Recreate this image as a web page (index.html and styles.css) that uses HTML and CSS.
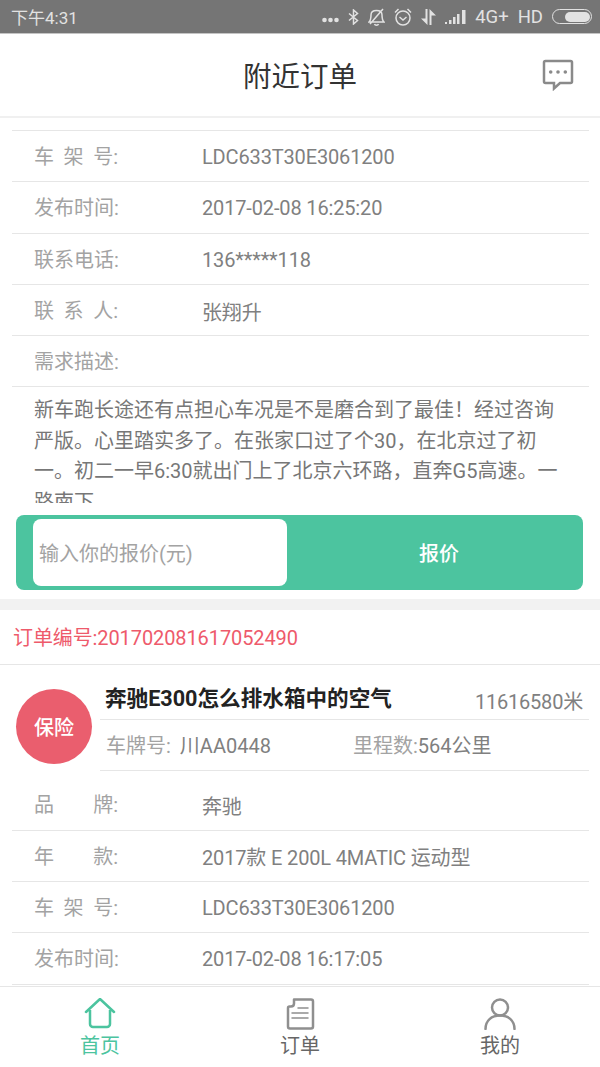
FILE: index.html
```html
<!DOCTYPE html>
<html lang="zh-CN">
<head>
    <meta charset="UTF-8">
    <meta name="viewport" content="width=device-width, initial-scale=1.0">
    <title>附近订单</title>
    <link rel="stylesheet" href="styles.css">
</head>
<body>
    <div class="page">
        <!-- Status bar -->
        <div class="status-bar">
            <span class="status-time">下午4:31</span>
            <div class="status-right">
                <svg class="st-fill st-dots" width="17" height="6" viewBox="0 0 17 6"><circle cx="2.500" cy="3" r="2.300"/><circle cx="8.500" cy="3" r="2.300"/><circle cx="14.500" cy="3" r="2.300"/></svg>
                <svg class="st-line" width="11" height="16" viewBox="0 0 11 16"><path d="M1 4.500l8.500 7-4 3.500V1l4 3.500L1 11.500"/></svg>
                <svg class="st-line" width="17" height="18" viewBox="0 0 17 18"><path d="M1 14c2-2 2-4 2-7s2-4.500 5.500-4.500S14 4 14 7s0 5 2 7zM6.500 16c.5 1.500 3.500 1.500 4 0M2 16L15 1"/></svg>
                <svg class="st-line" width="18" height="18" viewBox="0 0 18 18"><circle cx="9" cy="10" r="7"/><path d="M5.500 9l3.500 3 3.500-3M1 4.500L4.500 1M17 4.500L13.500 1"/></svg>
                <svg class="st-fill" width="15" height="16" viewBox="0 0 15 16"><path d="M4.500 0h2v16L0 9.500h4.500zM8.500 0L15 6.500h-4.500V16h-2z"/></svg>
                <svg class="st-fill" width="21" height="14" viewBox="0 0 21 14"><rect x="0" y="12" width="2" height="2"/><rect x="4" y="10" width="2.500" height="4"/><rect x="8" y="7" width="2.500" height="7"/><rect x="12" y="4" width="2.500" height="10"/><rect x="17" y="0" width="3.500" height="14"/></svg>
                <span class="status-net">4G+</span>
                <span class="status-net">HD</span>
                <div class="battery"><div class="battery-level"></div></div>
            </div>
        </div>

        <!-- Header -->
        <div class="header">
            <h1>附近订单</h1>
            <svg class="msg-icon" width="32" height="32" viewBox="0 0 32 32"><path d="M3.500 2h25a1.500 1.500 0 0 1 1.500 1.500v19a1.500 1.500 0 0 1-1.500 1.500H18l-6 5.500V24H3.500A1.500 1.500 0 0 1 2 22.500v-19A1.500 1.500 0 0 1 3.500 2z"/><circle cx="8.700" cy="13" r="1.800"/><circle cx="16" cy="13" r="1.800"/><circle cx="23.300" cy="13" r="1.800"/></svg>
        </div>

        <div class="content">
            <!-- First order (scrolled) -->
            <div class="order-first">
                <div class="info-row"><div class="label"><span>车</span><span>架</span><span>号:</span></div><span class="value">LDC633T30E3061200</span></div>
                <div class="info-row"><div class="label"><span>发布时间:</span></div><span class="value">2017-02-08 16:25:20</span></div>
                <div class="info-row"><div class="label"><span>联系电话:</span></div><span class="value">136*****118</span></div>
                <div class="info-row"><div class="label"><span>联</span><span>系</span><span>人:</span></div><span class="value">张翔升</span></div>
                <div class="info-row"><div class="label"><span>需求描述:</span></div></div>
                <div class="desc">新车跑长途还有点担心车况是不是磨合到了最佳！经过咨询严版。心里踏实多了。在张家口过了个30，在北京过了初一。初二一早6:30就出门上了北京六环路，直奔G5高速。一路南下。</div>
            </div>

            <div class="quote-bar">
                <div class="quote-input">输入你的报价(元)</div>
                <div class="quote-btn">报价</div>
            </div>

            <div class="divider"></div>

            <!-- Second order -->
            <div class="order-no">订单编号:201702081617052490</div>
            <div class="order-top">
                <div class="badge">保险</div>
                <div class="order-main">
                    <div class="order-title">
                        <span class="title-text">奔驰E300怎么排水箱中的空气</span>
                        <span class="distance">11616580米</span>
                    </div>
                    <div class="order-sub">
                        <span class="sub-plate"><span class="sub-label">车牌号:</span><span class="plate-no">川AA0448</span></span>
                        <span><span class="sub-label">里程数:</span>564公里</span>
                    </div>
                </div>
            </div>
            <div class="info-row no-line"><div class="label"><span>品</span><span>牌:</span></div><span class="value">奔驰</span></div>
            <div class="info-row"><div class="label"><span>年</span><span>款:</span></div><span class="value">2017款 E 200L 4MATIC 运动型</span></div>
            <div class="info-row"><div class="label"><span>车</span><span>架</span><span>号:</span></div><span class="value">LDC633T30E3061200</span></div>
            <div class="info-row"><div class="label"><span>发布时间:</span></div><span class="value">2017-02-08 16:17:05</span></div>
            <div class="info-row"></div>
        </div>

        <!-- Bottom tabs -->
        <div class="tabbar">
            <div class="tab tab-active">
                <svg width="32" height="32" viewBox="0 0 32 32"><path d="M2 14L16 1l14 13M6 12v14a3 3 0 0 0 3 3h14a3 3 0 0 0 3-3V12"/></svg>
                <span>首页</span>
            </div>
            <div class="tab">
                <svg width="32" height="32" viewBox="0 0 32 32"><path d="M10 1.500h17a2 2 0 0 1 2 2v25a2 2 0 0 1-2 2H6a2 2 0 0 1-2-2V10q0-1.500 1.500-1.500H7q3 0 3-3z"/><path class="thin" d="M14 10h10M8 15h16M8 20h16"/></svg>
                <span>订单</span>
            </div>
            <div class="tab">
                <svg width="32" height="32" viewBox="0 0 32 32"><circle cx="16" cy="9.500" r="8"/><path d="M1.500 31c0-8.500 6-13.500 14.500-13.500S30.500 22.500 30.500 31"/></svg>
                <span>我的</span>
            </div>
        </div>
    </div>
</body>
</html>
```

FILE: styles.css
```css
* {
    box-sizing: border-box;
}

body {
    margin: 0;
    font-family: Roboto, "Noto Sans CJK SC", sans-serif;
    background-color: white;
}

.page {
    width: 600px;
    height: 1067px;
    display: flex;
    flex-direction: column;
    overflow: hidden;
}

/* Status bar */
.status-bar {
    height: 34px;
    flex-shrink: 0;
    background-color: #757575;
    border-bottom: 1px solid #c4c4c4;
    color: #e2e2e2;
    display: flex;
    align-items: center;
    justify-content: space-between;
    padding: 0 8px 0 11px;
}

.status-time {
    font-size: 17px;
}

.status-right {
    display: flex;
    align-items: center;
    gap: 9px;
}

.st-dots, .st-fill {
    fill: #e2e2e2;
}

.st-dots {
    margin-top: 7px;
}

.st-line {
    fill: none;
    stroke: #e2e2e2;
    stroke-width: 1.500;
}

.status-net {
    font-size: 18.500px;
}

.battery {
    width: 40px;
    height: 15px;
    border: 1.500px solid #e2e2e2;
    border-radius: 8px;
    display: flex;
    justify-content: flex-end;
    padding: 1.500px;
}

.battery-level {
    width: 25px;
    background-color: #e2e2e2;
    border-radius: 5px;
}

/* Header */
.header {
    height: 84px;
    flex-shrink: 0;
    padding-bottom: 2px;
    border-bottom: 2px solid #f0f0f0;
    display: flex;
    align-items: center;
    justify-content: center;
    position: relative;
}

.header h1 {
    margin: 0;
    font-size: 28.500px;
    font-weight: 400;
    color: #333;
}

.msg-icon {
    position: absolute;
    right: 26px;
    top: 25px;
    fill: none;
    stroke: #8a8a8a;
    stroke-width: 2.500;
}

.msg-icon circle {
    fill: #8a8a8a;
    stroke: none;
}

/* Content */
.content {
    flex: 1;
    min-height: 0;
    overflow: hidden;
}

.order-first {
    padding-top: 12px;
}

.info-row {
    height: 51.300px;
    margin: 0 11px 0 12px;
    padding: 2px 0 0 22px;
    border-top: 1px solid #e6e6e6;
    display: flex;
    align-items: center;
    font-size: 20px;
}

.label {
    width: 84px;
    flex-shrink: 0;
    margin: 0 84px 3px 0;
    color: #a3a3a3;
    white-space: nowrap;
    display: flex;
    justify-content: space-between;
}

.value {
    color: #808080;
    letter-spacing: -0.150px;
}

.desc {
    height: 117px;
    margin: 0 11px 0 12px;
    padding: 8px 22px 0;
    border-top: 1px solid #e6e6e6;
    font-size: 20px;
    line-height: 30.500px;
    color: #777;
    overflow: hidden;
}

/* Quote bar */
.quote-bar {
    height: 75px;
    margin: 11.500px 17px 9px 16px;
    padding: 4px 0 4px 17px;
    background-color: #4cc49f;
    border-radius: 8px;
    display: flex;
}

.quote-input {
    width: 254px;
    padding-left: 6px;
    background-color: white;
    border-radius: 8px;
    color: #a3a3a3;
    font-size: 20px;
    display: flex;
    align-items: center;
}

.quote-btn {
    flex: 1;
    padding-left: 8px;
    color: white;
    font-size: 20px;
    font-weight: 500;
    display: flex;
    align-items: center;
    justify-content: center;
}

.divider {
    height: 11px;
    background-color: #f2f2f2;
}

/* Second order */
.order-no {
    height: 55px;
    padding-left: 13px;
    border-bottom: 1px solid #e6e6e6;
    color: #ee5a6b;
    font-size: 20px;
    letter-spacing: -0.100px;
    display: flex;
    align-items: center;
}

.order-top {
    display: flex;
    align-items: flex-start;
    padding: 0 11px 0 16px;
    margin-bottom: 7.400px;
}

.badge {
    width: 76px;
    height: 75px;
    flex-shrink: 0;
    margin: 24px 8px 0 0;
    border-radius: 50%;
    background-color: #ea5e6e;
    color: white;
    font-size: 20px;
    font-weight: 500;
    display: flex;
    align-items: center;
    justify-content: center;
}

.order-main {
    flex: 1;
}

.order-title {
    height: 55px;
    padding: 10px 6px 0 5px;
    border-bottom: 1px solid #e6e6e6;
    display: flex;
    align-items: center;
    justify-content: space-between;
}

.title-text {
    font-size: 21.600px;
    font-weight: 700;
    color: #222;
}

.distance {
    font-size: 20px;
    letter-spacing: -0.200px;
    color: #808080;
    padding-top: 8px;
}

.order-sub {
    height: 51px;
    padding-left: 6px;
    border-bottom: 1px solid #e6e6e6;
    display: flex;
    align-items: center;
    font-size: 20px;
    color: #808080;
}

.sub-plate {
    width: 247px;
}

.plate-no {
    margin-left: 9px;
}

.sub-label {
    color: #a3a3a3;
}

.no-line {
    border-top: none;
}

/* Bottom tabs */
.tabbar {
    height: 81px;
    flex-shrink: 0;
    border-top: 1px solid #e6e6e6;
    background-color: white;
    display: flex;
}

.tab {
    flex: 1;
    display: flex;
    flex-direction: column;
    align-items: center;
    padding-top: 11px;
    color: #666;
    font-size: 20px;
    line-height: 26px;
}

.tab svg {
    fill: none;
    stroke: #8f8f8f;
    stroke-width: 2.500;
    stroke-linecap: round;
    stroke-linejoin: round;
    margin-bottom: 3px;
}

.tab .thin {
    stroke-width: 1.500;
}

.tab-active {
    color: #4cc49f;
}

.tab-active svg {
    stroke: #4cc49f;
}
```
